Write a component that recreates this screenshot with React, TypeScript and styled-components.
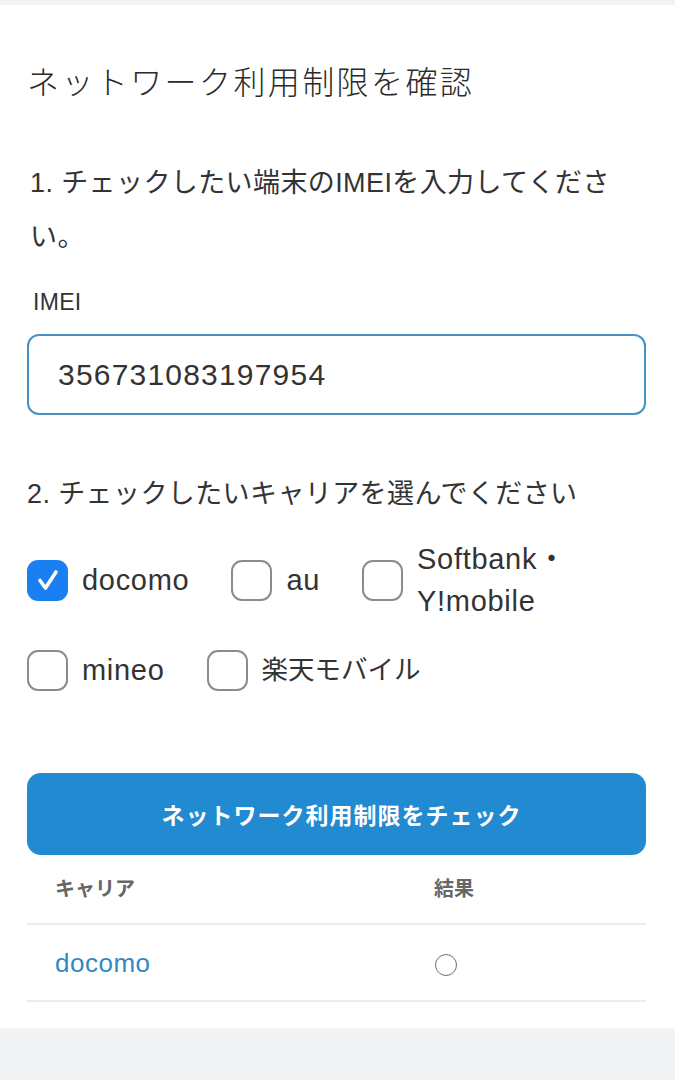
import React, { useState } from 'react'
import styled, { createGlobalStyle } from 'styled-components'

type CarrierProps = {
  checked: boolean
}

type CarrierNameProps = {
  cjk?: boolean
}

const GlobalStyle = createGlobalStyle`
  body {
    margin: 0;
    background: #f2f3f5;
    font-family: "Liberation Sans", "Noto Sans CJK JP", sans-serif;
    color: #333;
  }
`

const Page = styled.div`
  padding-top: 5px;
`
const Card = styled.section`
  background: #fff;
  padding: 54px 29px 26px 27px;
`
const Title = styled.h1`
  margin: 0;
  font-size: 32px;
  font-weight: 300;
  line-height: 48px;
  letter-spacing: 2.4px;
  color: #2b2b2b;
`
const Step = styled.p`
  margin: 0;
  font-size: 27px;
  line-height: 54px;
  letter-spacing: 0.4px;
  color: #333;
`
const FirstStep = styled(Step)`
  margin-top: 49px;
  padding-left: 3px;
  padding-right: 30px;
`
const SecondStep = styled(Step)`
  margin-top: 52px;
`
const FieldLabel = styled.label`
  display: block;
  margin: 23px 0 0 6px;
  font-size: 23px;
  line-height: 30px;
  letter-spacing: 0.3px;
  color: #333;
`
const ImeiInput = styled.input`
  display: block;
  box-sizing: border-box;
  width: 100%;
  height: 81px;
  margin-top: 17px;
  padding: 0 29px;
  border: 2px solid #4790c3;
  border-radius: 12px;
  font-family: inherit;
  font-size: 30px;
  letter-spacing: 1.2px;
  color: #333;
  outline: none;
`
const CarrierList = styled.div`
  display: flex;
  flex-wrap: wrap;
  column-gap: 42px;
  row-gap: 27px;
  margin-top: 17px;
`
const CarrierOption = styled.label`
  display: flex;
  align-items: center;
  gap: 14px;
  cursor: pointer;
`
const Box = styled.span<CarrierProps>`
  flex: none;
  box-sizing: border-box;
  width: 41px;
  height: 41px;
  border-radius: 11px;
  border: ${p => (p.checked ? 'none' : '2.5px solid #8c8c8c')};
  background: ${p => (p.checked ? '#1a7ff3' : '#fff')};
  display: flex;
  align-items: center;
  justify-content: center;
`
const CarrierName = styled.span<CarrierNameProps>`
  font-size: ${p => (p.cjk ? '26.5px' : '29px')};
  letter-spacing: ${p => (p.cjk ? '0' : '0.7px')};
  line-height: 42px;
  color: #333;
`
const CheckButton = styled.button`
  display: block;
  width: 100%;
  height: 82px;
  margin-top: 82px;
  padding: 0 0 0 10px;
  border: none;
  border-radius: 14px;
  background: #228ad1;
  color: #fff;
  font-family: inherit;
  font-size: 23px;
  font-weight: 700;
  letter-spacing: 1px;
  cursor: pointer;
`
const ResultTable = styled.div`
  display: grid;
  grid-template-columns: 379px 1fr;
`
const HeadCell = styled.div`
  padding: 15px 0 15px 28px;
  font-size: 20px;
  line-height: 38px;
  font-weight: 700;
  color: #666;
  border-bottom: 2px solid #ececec;
`
const Cell = styled.div`
  padding: 19px 0 18px 28px;
  font-size: 26px;
  line-height: 38px;
  letter-spacing: 0.5px;
  border-bottom: 2px solid #ececec;
  color: #444;
`
const CarrierCell = styled(Cell)`
  color: #2f8ac4;
`
const ResultMark = styled.span`
  display: inline-block;
  box-sizing: border-box;
  width: 22px;
  height: 22px;
  margin-left: 1px;
  border: 1.5px solid #6f6f6f;
  border-radius: 50%;
  vertical-align: middle;
`

const carriers = [
  { id: 'docomo', label: ['docomo'] },
  { id: 'au', label: ['au'] },
  { id: 'softbank', label: ['Softbank・', 'Y!mobile'] },
  { id: 'mineo', label: ['mineo'] },
  { id: 'rakuten', label: ['楽天モバイル'], cjk: true },
]

function Check({ checked }: CarrierProps) {
  return (
    <Box checked={checked}>
      {checked && (
        <svg width="26" height="26" viewBox="0 0 26 26">
          <path d="M5 13.5l5.5 7.5L21 5" fill="none" stroke="#fff" strokeWidth="3.6" strokeLinecap="round" strokeLinejoin="round" />
        </svg>
      )}
    </Box>
  )
}

function App() {
  const [imei, setImei] = useState('356731083197954')
  const [selected, setSelected] = useState<string[]>(['docomo'])

  const toggle = (id: string): void => {
    setSelected(s => (s.includes(id) ? s.filter(x => x !== id) : [...s, id]))
  }

  return (
    <Page>
      <GlobalStyle />
      <Card>
        <Title>ネットワーク利用制限を確認</Title>
        <FirstStep>1. チェックしたい端末のIMEIを入力してください。</FirstStep>
        <FieldLabel htmlFor="imei">IMEI</FieldLabel>
        <ImeiInput id="imei" value={imei} onChange={e => setImei(e.target.value)} />
        <SecondStep>2. チェックしたいキャリアを選んでください</SecondStep>
        <CarrierList>
          {carriers.map(c => (
            <CarrierOption key={c.id} onClick={() => toggle(c.id)}>
              <Check checked={selected.includes(c.id)} />
              <CarrierName cjk={c.cjk}>
                {c.label.map((l, i) => (
                  <React.Fragment key={l}>
                    {i > 0 && <br />}
                    {l}
                  </React.Fragment>
                ))}
              </CarrierName>
            </CarrierOption>
          ))}
        </CarrierList>
        <CheckButton>ネットワーク利用制限をチェック</CheckButton>
        <ResultTable>
          <HeadCell>キャリア</HeadCell>
          <HeadCell>結果</HeadCell>
          <CarrierCell>docomo</CarrierCell>
          <Cell><ResultMark /></Cell>
        </ResultTable>
      </Card>
    </Page>
  )
}

export default App
